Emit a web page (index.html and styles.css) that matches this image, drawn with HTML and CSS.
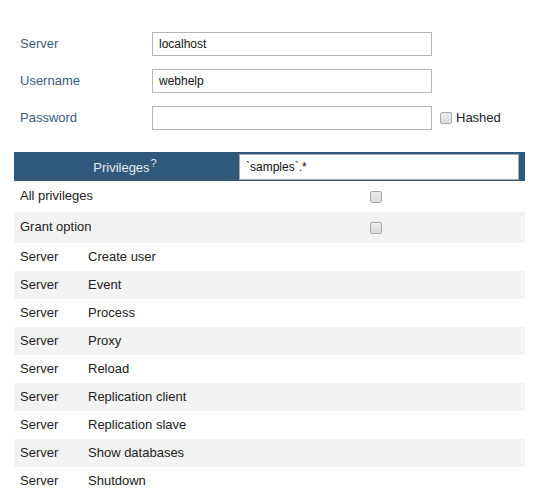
FILE: index.html
```html
<!DOCTYPE html>
<html>
<head>
<meta charset="utf-8">
<link rel="stylesheet" href="styles.css">
</head>
<body>
<div class="form">
  <div class="frow"><span class="flabel">Server</span><input class="finput" type="text" value="localhost"></div>
  <div class="frow"><span class="flabel">Username</span><input class="finput" type="text" value="webhelp"></div>
  <div class="frow"><span class="flabel">Password</span><input class="finput" type="password" value=""><input class="cb hashcb" type="checkbox"><span class="hashed">Hashed</span></div>
</div>
<div class="priv">
  <div class="prow head">
    <div class="hcell">Privileges<sup>?</sup></div>
    <div class="hinputcell"><input class="hinput" type="text" value="`samples`.*"></div>
  </div>
  <div class="prow tall"><div class="span2">All privileges</div><div class="cbcell"><input class="cb" type="checkbox"></div></div>
  <div class="prow tall alt"><div class="span2">Grant option</div><div class="cbcell"><input class="cb" type="checkbox"></div></div>
  <div class="prow"><div class="c1">Server</div><div class="c2">Create user</div></div>
  <div class="prow alt"><div class="c1">Server</div><div class="c2">Event</div></div>
  <div class="prow"><div class="c1">Server</div><div class="c2">Process</div></div>
  <div class="prow alt"><div class="c1">Server</div><div class="c2">Proxy</div></div>
  <div class="prow"><div class="c1">Server</div><div class="c2">Reload</div></div>
  <div class="prow alt"><div class="c1">Server</div><div class="c2">Replication client</div></div>
  <div class="prow"><div class="c1">Server</div><div class="c2">Replication slave</div></div>
  <div class="prow alt"><div class="c1">Server</div><div class="c2">Show databases</div></div>
  <div class="prow"><div class="c1">Server</div><div class="c2">Shutdown</div></div>
</div>
</body>
</html>
```
FILE: styles.css
```css
* { box-sizing: border-box; }
body {
  margin: 0;
  padding: 32px 14px 0 14px;
  font-family: "Liberation Sans", Arial, sans-serif;
  font-size: 13px;
  color: #222;
  background: #fff;
}
.form {
  display: flex;
  flex-direction: column;
  gap: 13px;
  padding-left: 6px;
}
.frow {
  display: flex;
  align-items: center;
  height: 24px;
}
.flabel {
  width: 132px;
  color: #3b5d82;
  font-size: 13px;
  padding-bottom: 2px;
}
.finput {
  width: 280px;
  height: 24px;
  border: 1px solid #b5b5b5;
  padding: 0 6px;
  font-family: "Liberation Sans", Arial, sans-serif;
  font-size: 12px;
  color: #111;
  outline: none;
  margin: 0;
}
.cb {
  appearance: none;
  -webkit-appearance: none;
  width: 12px;
  height: 12px;
  margin: 0;
  border: 1px solid #a9a9a9;
  border-radius: 2px;
  background: linear-gradient(#ececec, #dcdcdc);
}
.hashcb { margin-left: 8px; }
.hashed { margin-left: 4px; color: #222; padding-bottom: 2px; }
.priv {
  margin-top: 22px;
  width: 511px;
}
.prow {
  display: grid;
  grid-template-columns: 68px 154px 280px 1fr;
  align-items: center;
  height: 28px;
  padding-bottom: 2px;
}
.prow.tall { height: 31px; }
.prow.alt { background: #f3f3f3; }
.prow.head {
  height: 29px;
  padding-bottom: 0;
  background: #30597c;
}
.hcell {
  grid-column: 1 / 3;
  text-align: center;
  color: #e6ecf2;
  font-size: 13px;
  padding-top: 2px;
}
.hcell sup {
  font-size: 11px;
  vertical-align: 5px;
  line-height: 0;
  margin-left: 1px;
}
.hinputcell {
  grid-column: 3 / 5;
  display: flex;
  padding: 0 6px 0 3px;
}
.hinput {
  width: 100%;
  height: 26px;
  margin: 0;
  border: 1px solid #aaa;
  box-shadow: inset 0 0 0 1px #fff;
  padding: 0 6px;
  font-family: "Liberation Sans", Arial, sans-serif;
  font-size: 12px;
  color: #111;
  outline: none;
}
.span2 {
  grid-column: 1 / 3;
  padding-left: 6px;
}
.cbcell {
  grid-column: 3;
  display: flex;
  justify-content: center;
  padding-top: 2px;
}
.c1 { padding-left: 6px; }
.c2 { padding-left: 6px; }
```
